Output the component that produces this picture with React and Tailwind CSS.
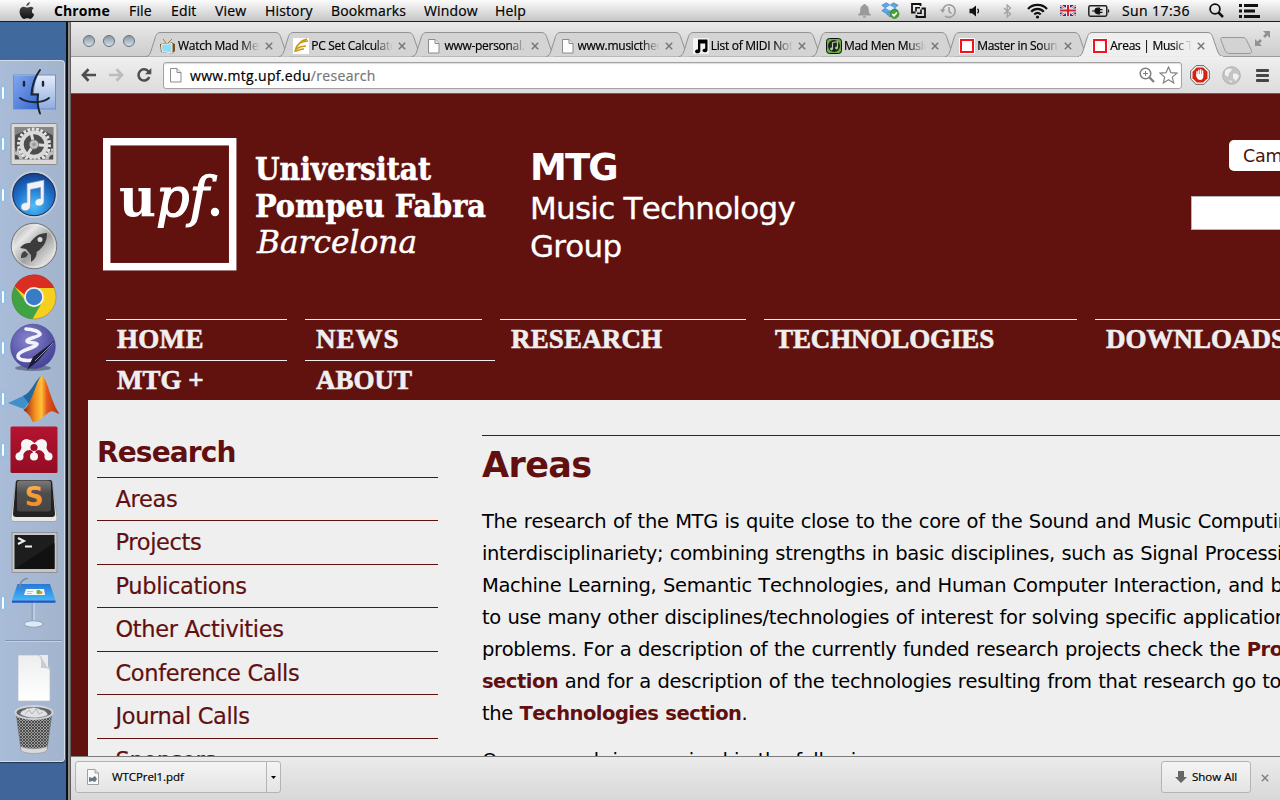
import React from "react";

/* ---------- Menu bar ---------- */

const MENUS = [
  { label: "File", width: "w-[42px]" },
  { label: "Edit", width: "w-[44px]" },
  { label: "View", width: "w-[50px]" },
  { label: "History", width: "w-[66px]" },
  { label: "Bookmarks", width: "w-[93px]" },
  { label: "Window", width: "w-[71px]" },
  { label: "Help", width: "w-[40px]" },
];

function AppleLogo() {
  return (
    <svg width="16" height="18" viewBox="0 0 16 18">
      <defs>
        <linearGradient id="apple" x1="0" y1="0" x2="0" y2="1">
          <stop offset="0" stopColor="#555" />
          <stop offset="1" stopColor="#111" />
        </linearGradient>
      </defs>
      <path
        fill="url(#apple)"
        d="M10.900 0c.2 1.700-1.500 4-3.500 3.900C7.200 2.200 8.900.3 10.900 0zM14.600 6.200c-2.500 1.500-2.100 5 .6 6.100-.6 1.800-2.100 4.500-3.800 4.600-1.200 0-1.600-.7-3.100-.7s-2 .7-3.100.7C3 16.900.6 12.900.6 9.700c0-3 1.900-4.900 4.100-4.900 1.400 0 2.400.8 3.500.8.900 0 2.200-.9 3.800-.8 1.100.1 2 .5 2.600 1.400z"
      />
    </svg>
  );
}

function BellIcon() {
  return (
    <svg width="15" height="16" viewBox="0 0 15 16" fill="#9a9a9a">
      <path d="M7.500 1c.8 0 1.300.5 1.300 1.200 2 .6 2.900 2.100 2.900 4.300 0 3 .5 4 2.300 5.300v.8H1v-.8C2.800 10.500 3.300 9.500 3.300 6.500c0-2.200.9-3.700 2.900-4.300C6.200 1.500 6.700 1 7.500 1z" />
      <path d="M5.800 13.200h3.400c0 2.200-3.400 2.200-3.400 0z" />
    </svg>
  );
}

function DropboxIcon() {
  return (
    <svg width="19" height="17" viewBox="0 0 19 17">
      <g fill="#5aa9e2" stroke="#2f78b5" strokeWidth=".6">
        <path d="M5.500.8L9 3.200 4.500 6 .8 3.300z" />
        <path d="M12.500.8L9 3.200 13.500 6l3.700-2.700z" />
        <path d="M4.500 6L.8 8.800 5.500 11.500 9 8.800z" />
        <path d="M13.500 6l3.700 2.800-4.700 2.700L9 8.800z" />
        <path d="M5.500 12L9 9.500l3.500 2.500L9 15z" />
      </g>
      <path d="M9 3.200L4.500 6 9 8.800 13.500 6z" fill="#d9effc" />
      <circle cx="13.500" cy="12" r="4.400" fill="#4aa52c" stroke="#2d7a18" strokeWidth=".7" />
      <path d="M11.300 12l1.700 1.800 2.900-3.400" fill="none" stroke="#fff" strokeWidth="1.500" />
    </svg>
  );
}

function SyncSquaresIcon() {
  return (
    <svg width="15" height="15" viewBox="0 0 15 15" fill="none" stroke="#111" strokeWidth="1.800">
      <path d="M4.500 9.500H1V1h8.500v2" />
      <path d="M10.500 5.500H14V14H5.500v-2" />
      <path d="M5 8.500V4.800h4M10 6.500v3.700H6" strokeWidth="1.600" />
    </svg>
  );
}

function TimeMachineIcon() {
  return (
    <svg width="17" height="16" viewBox="0 0 17 16" fill="none" stroke="#999" strokeWidth="1.500">
      <path d="M2.600 8A6.300 6.300 0 1 1 5 13" />
      <path d="M9 4v4.500l2.500 2" />
      <path d="M0 6.500h5.200L2.600 10z" fill="#999" stroke="none" />
    </svg>
  );
}

function VolumeIcon() {
  return (
    <svg width="12" height="12" viewBox="0 0 12 12" fill="#111">
      <path d="M.5 3.800H3L7 .5v11L3 8.200H.5z" />
      <path d="M8.500 3.800c1.300 1.300 1.300 3.100 0 4.400" fill="none" stroke="#111" strokeWidth="1.300" />
    </svg>
  );
}

function BluetoothIcon() {
  return (
    <svg width="9" height="14" viewBox="0 0 9 14" fill="none" stroke="#a2a2a2" strokeWidth="1.300">
      <path d="M1 4l6.500 6-3.300 3V1l3.300 3L1 10" />
    </svg>
  );
}

function WifiIcon() {
  return (
    <svg width="21" height="16" viewBox="0 0 21 16" fill="none" stroke="#111" strokeWidth="2.200">
      <path d="M1 6C6 .5 15 .5 20 6" />
      <path d="M4.200 8.800c3.600-3.900 9-3.900 12.600 0" />
      <path d="M7.300 11.500c1.900-1.900 4.500-1.900 6.400 0" />
      <circle cx="10.500" cy="14" r="1.600" fill="#111" stroke="none" />
    </svg>
  );
}

function FlagIcon() {
  return (
    <svg width="16" height="11" viewBox="0 0 16 11">
      <rect width="16" height="11" fill="#27357c" />
      <path d="M0 0l16 11M16 0L0 11" stroke="#fff" strokeWidth="2.200" />
      <path d="M0 0l16 11M16 0L0 11" stroke="#d33" strokeWidth=".8" />
      <path d="M8 0v11M0 5.500h16" stroke="#fff" strokeWidth="4" />
      <path d="M8 0v11M0 5.500h16" stroke="#d4202c" strokeWidth="2.200" />
    </svg>
  );
}

function BatteryIcon() {
  return (
    <svg width="22" height="12" viewBox="0 0 22 12">
      <rect x=".8" y=".8" width="18" height="10.400" rx="1.600" fill="none" stroke="#222" strokeWidth="1.500" />
      <path d="M20 4c1.600.3 1.600 3.700 0 4z" fill="#222" />
      <path d="M4 6h3M7 6c0-2 1.500-2.800 3-2.800h1.500v5.600H10C8.500 8.800 7 8 7 6zM11 4.600h3.500M11 7.400h3.500" fill="#111" stroke="#111" strokeWidth="1.200" />
    </svg>
  );
}

function SearchIcon() {
  return (
    <svg width="15" height="15" viewBox="0 0 15 15" fill="none" stroke="#111">
      <circle cx="6" cy="6" r="4.900" strokeWidth="1.800" />
      <path d="M9.500 9.500l4.500 4.500" strokeWidth="2.500" />
    </svg>
  );
}

function ListIcon() {
  return (
    <svg width="21" height="14" viewBox="0 0 21 14" fill="#111">
      <rect x="0" y="0" width="3" height="3" />
      <rect x="5" y="0" width="14" height="3" />
      <rect x="0" y="5.500" width="3" height="3" />
      <rect x="5" y="5.500" width="11" height="3" />
      <rect x="0" y="11" width="3" height="3" />
      <rect x="5" y="11" width="16" height="3" />
    </svg>
  );
}

function MenuBar() {
  return (
    <header className="flex h-[22px] shrink-0 items-center border-b border-[#101c2c] bg-gradient-to-b from-[#fbfbfb] to-[#c6c6c6] pl-[19px] text-[14px] leading-[21px] whitespace-nowrap text-black">
      <div className="w-[35px] shrink-0">
        <AppleLogo />
      </div>
      <span className="w-[75px] shrink-0 font-bold tracking-[0.1px]">Chrome</span>
      {MENUS.map((m) => (
        <span key={m.label} className={`shrink-0 tracking-[0.15px] [-webkit-text-stroke:0.200px_black] ${m.width}`}>
          {m.label}
        </span>
      ))}
      <div className="flex flex-1 items-center justify-end pr-[20px]">
        <div className="mr-[9px]"><BellIcon /></div>
        <div className="mr-[11px]"><DropboxIcon /></div>
        <div className="mr-[14px]"><SyncSquaresIcon /></div>
        <div className="mr-[12px]"><TimeMachineIcon /></div>
        <div className="mr-[22px]"><VolumeIcon /></div>
        <div className="mr-[15px]"><BluetoothIcon /></div>
        <div className="mr-[12px]"><WifiIcon /></div>
        <div className="mr-[12px]"><FlagIcon /></div>
        <div className="mr-[12px]"><BatteryIcon /></div>
        <span className="mr-[17px] w-[70px] tracking-[0.4px] [-webkit-text-stroke:0.200px_black]">Sun 17:36</span>
        <div className="mr-[15px]"><SearchIcon /></div>
        <ListIcon />
      </div>
    </header>
  );
}

/* ---------- Dock ---------- */

function FinderIcon() {
  return (
    <svg width="50" height="50" viewBox="0 0 50 50">
      <defs>
        <linearGradient id="finderL" x1="0" y1="0" x2="1" y2="1">
          <stop offset="0" stopColor="#7fa6ee" />
          <stop offset="1" stopColor="#3767cc" />
        </linearGradient>
        <linearGradient id="finderR" x1="0" y1="0" x2="0" y2="1">
          <stop offset="0" stopColor="#e6eefb" />
          <stop offset="1" stopColor="#8fabdf" />
        </linearGradient>
      </defs>
      <rect x="4.500" y="7" width="42" height="34" fill="url(#finderR)" stroke="#6f8fcb" />
      <path d="M5 7.500h24c-3 6-4 12-4 18h5c-1 5-1 10 0 15.500H5z" fill="url(#finderL)" />
      <g fill="none" stroke="#1c2430" strokeWidth="2" strokeLinecap="round">
        <path d="M31 2c-6 8-8 16-8.500 24.500H29C28 33 29 40 31 45.500" />
        <path d="M11 30c8 5.500 22 5.500 29 0" />
        <path d="M15 14v3.500M34 14v3.500" strokeWidth="2.400" />
      </g>
    </svg>
  );
}

function PreferencesIcon() {
  return (
    <svg width="50" height="50" viewBox="0 0 50 50">
      <defs>
        <radialGradient id="prefGear">
          <stop offset="0" stopColor="#8a8a8a" />
          <stop offset="1" stopColor="#e2e2e2" />
        </radialGradient>
        <clipPath id="prefClip">
          <rect x="5.500" y="8" width="39" height="32.500" />
        </clipPath>
      </defs>
      <rect x="2" y="4.500" width="46" height="41" rx="1" fill="#d9d9d9" stroke="#8b8b8b" />
      <g clipPath="url(#prefClip)">
        <rect x="5.500" y="8" width="39" height="33" fill="#4c4c4c" />
        <path d="M5.500 8h39v9c-10-8-29-8-39 0z" fill="#858585" />
        <g fill="none">
          <circle cx="6" cy="40" r="9" stroke="#c9c9c9" strokeWidth="3" strokeDasharray="2.400 1.600" />
          <circle cx="6" cy="40" r="6" stroke="#bdbdbd" strokeWidth="3.500" />
          <circle cx="44" cy="40" r="9" stroke="#c9c9c9" strokeWidth="3" strokeDasharray="2.400 1.600" />
          <circle cx="44" cy="40" r="6" stroke="#bdbdbd" strokeWidth="3.500" />
          <circle cx="25" cy="25.500" r="15.500" stroke="#e6e6e6" strokeWidth="3" strokeDasharray="2.600 1.800" />
          <circle cx="25" cy="25.500" r="12.300" stroke="#d9d9d9" strokeWidth="4" />
        </g>
        <path d="M25 25.500L18 36M25 25.500l-3-12M25 25.500l12 1" stroke="#dcdcdc" strokeWidth="3" />
        <circle cx="25" cy="25.500" r="4.500" fill="url(#prefGear)" stroke="#777" />
      </g>
    </svg>
  );
}

function ITunesIcon() {
  return (
    <svg width="50" height="50" viewBox="0 0 50 50">
      <defs>
        <radialGradient id="itunes" cx=".5" cy=".75" r=".75">
          <stop offset="0" stopColor="#4bc1fa" />
          <stop offset=".55" stopColor="#1f72cc" />
          <stop offset="1" stopColor="#123a86" />
        </radialGradient>
      </defs>
      <circle cx="25" cy="24.500" r="22.500" fill="url(#itunes)" stroke="#c8cdd6" strokeWidth="2" />
      <circle cx="25" cy="24.500" r="21.200" fill="none" stroke="#1b2f57" strokeWidth="1" />
      <path
        d="M18 13.500l17-3.500v21c0 6-9 6.500-9 2 0-3.500 3-4.500 5.500-4.500V17.500l-10 2v16c0 6.500-9.500 7-9.500 1.500 0-3.500 3-4.500 6-4.500z"
        fill="#eef3fa"
        stroke="#7d95bd"
        strokeWidth=".7"
      />
    </svg>
  );
}

function LaunchpadIcon() {
  return (
    <svg width="50" height="50" viewBox="0 0 50 50">
      <defs>
        <linearGradient id="launch" x1="0" y1="0" x2="1" y2="1">
          <stop offset="0" stopColor="#8f8f8f" />
          <stop offset=".3" stopColor="#e6e6e6" />
          <stop offset=".55" stopColor="#a0a0a0" />
          <stop offset=".8" stopColor="#dedede" />
          <stop offset="1" stopColor="#8a8a8a" />
        </linearGradient>
      </defs>
      <circle cx="25" cy="25" r="22.800" fill="url(#launch)" stroke="#777" />
      <circle cx="25" cy="25" r="21" fill="none" stroke="#f4f4f4" strokeWidth=".8" opacity=".7" />
      <path d="M38 12c-8 0-13 4-17 10-4 0-7 1-10 5l6 1 5 6 0 7c4-3 6-6 5.500-10C34 27 38 21 38 12z" fill="#3c3c3c" />
      <path d="M16 30c-3 1-4 3-4 7 4 0 6-1 7-4z" fill="#444" />
      <circle cx="31" cy="18.500" r="2.500" fill="#d8d8d8" />
    </svg>
  );
}

function ChromeIcon() {
  return (
    <svg width="50" height="50" viewBox="0 0 50 50">
      <circle cx="25" cy="25" r="22" fill="#f7cf1d" />
      <path d="M5.500 14.500A22 22 0 0 1 45.300 16H25a9.500 9.500 0 0 0-9 7z" fill="#db2e22" />
      <path d="M5.500 14.500A22 22 0 0 0 23.500 47l9.500-16.500c-4.500 6-12.500 5-16-1z" fill="#3fa344" />
      <circle cx="25" cy="25" r="10" fill="#f3f3f3" />
      <circle cx="25" cy="25" r="8.200" fill="#3a7cc4" />
      <circle cx="25" cy="25" r="22" fill="none" stroke="#555" strokeWidth=".7" opacity=".5" />
    </svg>
  );
}

function EmacsIcon() {
  return (
    <svg width="50" height="50" viewBox="0 0 50 50">
      <defs>
        <radialGradient id="emacs" cx=".4" cy=".35" r=".7">
          <stop offset="0" stopColor="#8886cf" />
          <stop offset="1" stopColor="#423f96" />
        </radialGradient>
      </defs>
      <ellipse cx="24" cy="45" rx="18" ry="3" fill="#45506a" opacity=".6" />
      <circle cx="24" cy="23.500" r="22.300" fill="url(#emacs)" stroke="#4a4a90" strokeWidth=".7" />
      <path
        d="M17 6c6 0 15 3 14 5.500-2 2.500-13 4-13 6.500 0 2.500 9 1 10 3-1 4-18 6-19 11.500-.5 5 10 6 17 4"
        fill="none"
        stroke="#f2f2fb"
        strokeWidth="3.600"
        strokeLinecap="round"
      />
      <path d="M46 17.500L29 38l-11 9 6-13z" fill="#1c1d33" />
      <path d="M44 20L26 38" stroke="#8d92b8" strokeWidth="1" />
    </svg>
  );
}

function MatlabIcon() {
  return (
    <svg width="54" height="50" viewBox="0 0 54 50">
      <defs>
        <linearGradient id="mlO" x1="0" y1="0" x2="1" y2="0">
          <stop offset="0" stopColor="#8e1f10" />
          <stop offset=".3" stopColor="#f08a1d" />
          <stop offset=".5" stopColor="#ffc23a" />
          <stop offset=".65" stopColor="#e4581a" />
          <stop offset="1" stopColor="#b32b13" />
        </linearGradient>
      </defs>
      <path d="M1 29l15-7c7-2 10-10 14-15l-4 16-9 12z" fill="#3f8fca" />
      <path d="M16 22c8-3 11-14 18-20L23 31z" fill="#25679e" />
      <path d="M35 2c5 1 8 24 17.500 38-4-1-7-4-10-2-6 4-10 10-17 10-2-6-5-9-9-12C25 31 30 3 35 2z" fill="url(#mlO)" />
    </svg>
  );
}

function MendeleyIcon() {
  return (
    <svg width="50" height="50" viewBox="0 0 50 50">
      <defs>
        <linearGradient id="mend" x1="0" y1="0" x2="0" y2="1">
          <stop offset="0" stopColor="#b5142f" />
          <stop offset="1" stopColor="#930d24" />
        </linearGradient>
      </defs>
      <rect x="1.500" y="1.500" width="47" height="46.500" rx="1.500" fill="url(#mend)" />
      <g fill="#f6f6f6">
        <circle cx="17.500" cy="19.500" r="5.500" />
        <circle cx="32.500" cy="19.500" r="5.500" />
        <circle cx="10.500" cy="31.500" r="4" />
        <circle cx="25" cy="31.500" r="4" />
        <circle cx="39.500" cy="31.500" r="4" />
        <path d="M12.500 18c1 5-1 8-4 11l5 3c1-4 3-7 7-7s4 4 4.500 7h0c.5-3 1-7 4.500-7s6 3 7 7l5-3c-3-3-5-6-4-11l-8-3-4 3-4-3z" />
      </g>
      <circle cx="25" cy="22.500" r="3.600" fill="#9a1029" />
      <path d="M21.500 14L25 17.500 28.500 14z" fill="#b5142f" />
    </svg>
  );
}

function SublimeIcon() {
  return (
    <svg width="50" height="50" viewBox="0 0 50 50">
      <defs>
        <linearGradient id="subl" x1="0" y1="0" x2="0" y2="1">
          <stop offset="0" stopColor="#7a7a7a" />
          <stop offset=".4" stopColor="#4e4e4e" />
          <stop offset="1" stopColor="#454545" />
        </linearGradient>
        <linearGradient id="sublS" x1="0" y1="0" x2="0" y2="1">
          <stop offset="0" stopColor="#fbb454" />
          <stop offset="1" stopColor="#f2811d" />
        </linearGradient>
      </defs>
      <path d="M7 5h36l5 37c0 2-1 3.500-3 3.500H5c-2 0-3-1.500-3-3.500z" fill="#e8e8e8" stroke="#9c9c9c" strokeWidth=".8" />
      <path d="M9 4h32c1.500 0 2 1 2.200 2.500L46 38c0 2-1 3-3 3H7c-2 0-3-1-3-3L6.800 6.500C7 5 7.500 4 9 4z" fill="#222" />
      <rect x="8" y="4.500" width="34" height="31" rx="3" fill="url(#subl)" />
      <text x="25" y="29.500" textAnchor="middle" fontFamily="DejaVu Sans, sans-serif" fontWeight="bold" fontSize="26" fill="url(#sublS)">
        S
      </text>
    </svg>
  );
}

function TerminalIcon() {
  return (
    <svg width="50" height="50" viewBox="0 0 50 50">
      <rect x="3" y="5.500" width="45" height="40" fill="#c4c6c9" stroke="#888" strokeWidth=".8" />
      <rect x="5.500" y="8" width="40" height="34" fill="#1d1d1d" />
      <path d="M5.500 42l40-26v26z" fill="#111" />
      <path d="M9 11l6 3-6 3M16 19.500h7" fill="none" stroke="#f1f1f1" strokeWidth="2" />
    </svg>
  );
}

function KeynoteIcon() {
  return (
    <svg width="50" height="50" viewBox="0 0 50 50">
      <defs>
        <linearGradient id="key" x1="0" y1="0" x2="0" y2="1">
          <stop offset="0" stopColor="#2a76d6" />
          <stop offset="1" stopColor="#42b8f7" />
        </linearGradient>
      </defs>
      <path d="M24 20v25" stroke="#8fa5c4" strokeWidth="3" />
      <path d="M25 20v25" stroke="#e8eef6" strokeWidth="1" />
      <ellipse cx="24.500" cy="46" rx="9.500" ry="3.200" fill="#dfe8f4" stroke="#7f95b5" strokeWidth=".8" />
      <path d="M8.500 6h32.500l5.500 16.500H3z" fill="url(#key)" />
      <path d="M3 22.500h43.500v2.300H3z" fill="#1b58c8" />
      <path d="M17 11h18l1 6H15z" fill="#f4f8fc" />
      <circle cx="29.500" cy="14" r="2.200" fill="#5fb846" />
      <circle cx="32" cy="14.500" r="1.500" fill="#f08b2c" />
      <path d="M18 13.500h6M18 15.500h5" stroke="#9bb" strokeWidth=".8" />
      <path d="M11 9c0-5 3-8 8-9" fill="none" stroke="#7f8794" strokeWidth="1.300" />
    </svg>
  );
}

function DocumentIcon() {
  return (
    <svg width="50" height="50" viewBox="0 0 50 50">
      <defs>
        <linearGradient id="docu" x1="0" y1="0" x2="0" y2="1">
          <stop offset="0" stopColor="#eceeef" />
          <stop offset="1" stopColor="#fff" />
        </linearGradient>
      </defs>
      <path d="M9 2h22l10 14v32H9z" fill="url(#docu)" stroke="#b5bcc6" strokeWidth=".7" />
      <path d="M29 2c4 3 3 8 3 13 4 0 6 0 9 2V16L31 2z" fill="#c9ccd0" />
      <path d="M31 2h8v13z" fill="#f3f4f5" opacity=".85" />
    </svg>
  );
}

function TrashIcon() {
  return (
    <svg width="50" height="52" viewBox="0 0 50 52">
      <defs>
        <pattern id="mesh" width="3" height="3" patternUnits="userSpaceOnUse">
          <rect width="3" height="3" fill="#9d9d9d" />
          <path d="M0 0l3 3M3 0L0 3" stroke="#3a3a3a" strokeWidth=".8" />
        </pattern>
      </defs>
      <path d="M7 8l5 37c3 4.500 23 4.500 26 0l5-37z" fill="url(#mesh)" stroke="#666" strokeWidth=".6" />
      <path d="M11.500 42c4 3.500 23 3.500 27 0l-.6 4.500c-4 4-22 4-25.800 0z" fill="#d7d9dc" stroke="#888" strokeWidth=".5" />
      <ellipse cx="25" cy="8.500" rx="18.500" ry="6.500" fill="#5f6368" stroke="#d2d4d8" strokeWidth="2" />
      <path d="M11 10c2-5 5-3 7-6 4 1 6-2 9 0 3 0 4 2 7 2 3 1 4 3 5 5-7 4-21 4-28-1z" fill="#dfe1e2" stroke="#888" strokeWidth=".6" />
      <path d="M16 10l4-4 3 4 4-5 3 5 4-2" fill="none" stroke="#a5a8aa" strokeWidth=".8" />
    </svg>
  );
}

const DOCK_ITEMS = [
  { Icon: FinderIcon, running: true },
  { Icon: PreferencesIcon, running: true },
  { Icon: ITunesIcon, running: true },
  { Icon: LaunchpadIcon, running: false },
  { Icon: ChromeIcon, running: true },
  { Icon: EmacsIcon, running: true },
  { Icon: MatlabIcon, running: true },
  { Icon: MendeleyIcon, running: true },
  { Icon: SublimeIcon, running: false },
  { Icon: TerminalIcon, running: false },
  { Icon: KeynoteIcon, running: true },
];

function Dock() {
  return (
    <aside className="flex w-[71px] shrink-0 bg-gradient-to-b from-[#406a9e] to-[#3f659b]">
      <div className="flex w-[66px] shrink-0 flex-col pt-[38px]">
        <div className="flex h-[702px] w-[65px] flex-col rounded-r-[4px] border-t border-r border-b border-[#d3dceb] bg-gradient-to-r from-[#a9bcd8] to-[#a3b4cd] pt-[6px] shadow-[0_1px_1px_#22334f]">
          {DOCK_ITEMS.map(({ Icon, running }, i) => (
            <div key={i} className="flex h-[51px] shrink-0 items-center">
              <span
                className={
                  running
                    ? "ml-[2px] h-[12px] w-[2px] shrink-0 rounded-[1px] bg-white shadow-[0_0_3px_1px_#7fc4f5]"
                    : "ml-[2px] h-[12px] w-[2px] shrink-0"
                }
              />
              <div className="flex w-[59px] shrink-0 justify-center">
                <Icon />
              </div>
            </div>
          ))}
          <div className="mt-[12px] ml-[5px] h-[2px] w-[57px] shrink-0 border-t border-[#8494b0] bg-[#c3cfe2]" />
          <div className="mt-[11px] flex h-[51px] shrink-0 justify-center pl-[3px]">
            <DocumentIcon />
          </div>
          <div className="flex shrink-0 justify-center pl-[4px]">
            <TrashIcon />
          </div>
        </div>
      </div>
      <div className="w-[2px] bg-[#0c0f14]" />
      <div className="flex-1 border-r border-[#5f5f5f] bg-[#8c8c8c]" />
    </aside>
  );
}

/* ---------- Browser chrome ---------- */

function TvFavicon() {
  return (
    <svg width="16" height="16" viewBox="0 0 16 16">
      <path d="M3 1l3 4M12 1L8 5" stroke="#a67b3f" strokeWidth="1" />
      <path d="M0 6l12-1.500L15 6v7l-3 2.500L1 14z" fill="#7b4c1c" />
      <path d="M1.500 6.500l10.500-1v9.500L2 13.500z" fill="#8edcf7" stroke="#e6f6fb" strokeWidth="1" />
    </svg>
  );
}

function FeatherFavicon() {
  return (
    <svg width="16" height="16" viewBox="0 0 16 16">
      <rect width="16" height="16" fill="#fff" />
      <path d="M2 14c1-7 5-11 13-11M3 11c3-2 5-3 10-3M5 7c2-3 5-5 9-6M3 13c3-1 5-2 8-2" fill="none" stroke="#c99a10" strokeWidth="1.600" />
    </svg>
  );
}

function PageFavicon() {
  return (
    <svg width="16" height="16" viewBox="0 0 16 16">
      <path d="M2.500 1.500h6.500l4 4v9.500H2.500z" fill="#fdfdfd" stroke="#8c8c8c" />
      <path d="M9 1.500v4h4" fill="#e9e9e9" stroke="#8c8c8c" />
    </svg>
  );
}

function NoteFavicon() {
  return (
    <svg width="16" height="16" viewBox="0 0 16 16">
      <rect width="16" height="16" fill="#f3f3f3" />
      <path d="M5 1.500h9.500V12c0 3-5 3-5 .6 0-1.500 1.500-2 2.700-1.900V5.500H7.300V13c0 3-5.300 3-5.300.5 0-1.600 1.700-2.200 3-2z" fill="#000" />
    </svg>
  );
}

function GreenNoteFavicon() {
  return (
    <svg width="16" height="16" viewBox="0 0 16 16">
      <rect x=".5" y=".5" width="15" height="15" rx="3" fill="#69b23f" stroke="#111" />
      <circle cx="8" cy="8" r="6" fill="#20251d" />
      <path d="M6.500 4.500l5-.8v6M6.500 4.500v6.500" fill="none" stroke="#b7c9ad" strokeWidth="1.200" />
      <circle cx="5.500" cy="11" r="1.400" fill="#b7c9ad" />
      <circle cx="10.500" cy="10" r="1.400" fill="#b7c9ad" />
    </svg>
  );
}

function RedSquareFavicon() {
  return (
    <svg width="16" height="16" viewBox="0 0 16 16">
      <rect width="16" height="16" fill="#fff" />
      <rect x="2" y="2" width="12" height="12" fill="#fff" stroke="#f5121a" strokeWidth="2" />
    </svg>
  );
}

const TABS = [
  { title: "Watch Mad Men", Icon: TvFavicon },
  { title: "PC Set Calculator", Icon: FeatherFavicon },
  { title: "www-personal.umich", Icon: PageFavicon },
  { title: "www.musictheory.net", Icon: PageFavicon },
  { title: "List of MIDI Notes", Icon: NoteFavicon },
  { title: "Mad Men Music", Icon: GreenNoteFavicon },
  { title: "Master in Sound", Icon: RedSquareFavicon },
  { title: "Areas | Music Technology", Icon: RedSquareFavicon, active: true },
];

function Tab({ title, Icon, active }) {
  return (
    <div className={active ? "relative z-10 flex h-[25px] w-[133.2px] shrink-0 items-center pl-[14px]" : "relative flex h-[25px] w-[133.2px] shrink-0 items-center pl-[14px]"}>
      <svg className="absolute top-0 left-0" width="146" height="25" viewBox="0 0 146 25">
        <path
          d="M0 24.500C3 24.300 4 22 5 19L9.500 4.500C10.500 1.500 12 .5 15 .5H129c3 0 4.500 1 5.500 4L139.500 19c1 3 2.500 5.500 6 5.500"
          fill={active ? "#efefef" : "#d4d4d4"}
          stroke="#929292"
        />
        {active && <path d="M1 24.600h144" stroke="#efefef" />}
      </svg>
      <span className="relative mt-[3px] shrink-0">
        <Icon />
      </span>
      <span className="relative mt-[3px] ml-[2px] w-[82px] shrink-0 overflow-hidden text-[12px] leading-[18px] tracking-[-0.28px] whitespace-nowrap text-black [-webkit-text-stroke:0.200px_black] [mask-image:linear-gradient(to_right,black_76%,transparent_100%)]">
        {title}
      </span>
      <svg className="relative mt-[3px] ml-[5px] shrink-0" width="8" height="8" viewBox="0 0 8 8" stroke="#777" strokeWidth="1.500">
        <path d="M.8.8l6.400 6.400M7.200.8L.8 7.200" />
      </svg>
    </div>
  );
}

function TabStrip() {
  return (
    <div className="flex h-[35px] shrink-0 items-end border-b border-[#9b9b9b] bg-gradient-to-b from-[#e9e9e9] to-[#cdcdcd]">
      <div className="flex w-[75px] shrink-0 items-center gap-[8px] self-start pt-[13px] pl-[12px]">
        {[0, 1, 2].map((i) => (
          <span key={i} className="h-[12px] w-[12px] rounded-full border border-[#65707c] bg-gradient-to-b from-[#8b97a3] to-[#d6dfe8]" />
        ))}
      </div>
      <div className="-mb-px flex shrink-0">
        {TABS.map((t) => (
          <Tab key={t.title} {...t} />
        ))}
      </div>
      <svg className="mb-[2px] ml-[8px] shrink-0" width="33" height="17" viewBox="0 0 33 17">
        <path d="M3 .5h19c3 0 4 1 5 3.500l4.500 9.500c.5 2-.5 3-2.500 3H10c-2.500 0-4-1-5-3L.8 3C.3 1.500 1 .5 3 .5z" fill="#d3d3d3" stroke="#999" />
      </svg>
      <svg className="mb-[10px] ml-[2px] shrink-0" width="15" height="15" viewBox="0 0 15 15" fill="#929292">
        <path d="M8 0h7v7l-2.500-2.500L10 7 8 5l2.500-2.500z" />
        <path d="M7 15H0V8l2.500 2.500L5 8l2 2-2.500 2.500z" />
      </svg>
    </div>
  );
}

function Toolbar() {
  return (
    <div className="flex h-[37px] shrink-0 items-center border-b border-[#7b5654] bg-gradient-to-b from-[#efefef] to-[#dcdcdc] pl-[10px]">
      <svg width="15" height="14" viewBox="0 0 15 14" fill="none" stroke="#4d4d4d" strokeWidth="2.700">
        <path d="M15 7H2.500M7.500 1.300L2 7l5.500 5.700" />
      </svg>
      <svg className="ml-[13px]" width="15" height="14" viewBox="0 0 15 14" fill="none" stroke="#bdbdbd" strokeWidth="2.700">
        <path d="M0 7h12.500M7.500 1.300L13 7l-5.500 5.700" />
      </svg>
      <svg className="ml-[12px]" width="16" height="16" viewBox="0 0 16 16" fill="none" stroke="#4d4d4d" strokeWidth="2.500">
        <path d="M12.500 4.500A5.600 5.600 0 1 0 13.300 10" />
        <path d="M15.300 1v6.300H9z" fill="#4d4d4d" stroke="none" />
      </svg>
      <div className="ml-[11px] flex h-[27px] w-[1019px] shrink-0 items-center rounded-[3px] border border-[#a3a3a3] bg-white pl-[4px] shadow-[inset_0_1px_1px_#ddd]">
        <PageFavicon />
        <span className="mt-[1px] ml-[6px] flex-1 text-[14px] leading-[20px] tracking-[0.32px] text-black [-webkit-text-stroke:0.200px]">
          www.mtg.upf.edu<span className="text-[#757575]">/research</span>
        </span>
        <svg width="16" height="16" viewBox="0 0 16 16" fill="none" stroke="#7d7d7d">
          <circle cx="6.500" cy="6.500" r="5.300" strokeWidth="1.500" />
          <path d="M10.500 10.500l4.500 4.500" strokeWidth="2.200" />
          <path d="M6.500 4v5M4 6.500h5" />
        </svg>
        <svg className="mr-[3px] ml-[4px]" width="19" height="18" viewBox="0 0 19 18" fill="#fff" stroke="#858585" strokeWidth="1.200">
          <path d="M9.500 1l2.400 5.600 6 .5-4.600 4 1.400 5.900-5.200-3.200L4.300 17l1.400-5.900-4.600-4 6-.5z" />
        </svg>
      </div>
      <svg className="ml-[8px] shrink-0" width="20" height="20" viewBox="0 0 20 20">
        <path d="M6 .7h8L19.300 6v8L14 19.300H6L.7 14V6z" fill="#fff" stroke="#5d5d5d" />
        <path d="M6.700 2.500h6.600l4.200 4.200v6.600l-4.200 4.200H6.700l-4.200-4.200V6.700z" fill="#d8200f" />
        <path
          d="M7 10.500V6.800M8.800 9V5.200M10.700 9V4.800M12.600 9.500V6"
          fill="none"
          stroke="#fff"
          strokeWidth="1.400"
          strokeLinecap="round"
        />
        <path d="M6.300 9h7v2.500c0 2-1.200 3.500-3 3.500-2 0-3-1-4-3.500z" fill="#fff" />
      </svg>
      <svg className="ml-[12px] shrink-0" width="19" height="19" viewBox="0 0 19 19">
        <circle cx="9.500" cy="9.500" r="8.800" fill="#c4c4c4" stroke="#b0b0b0" />
        <path d="M3 5c3-3 6-3 7-1l-3 3-1 4-3-2zM11 8c3-1 5 0 6 2l-3 5-3-3zM7 14l3 1-1 2z" fill="#f1f1f1" />
      </svg>
      <svg className="ml-[15px] shrink-0" width="13" height="13" viewBox="0 0 13 13" fill="#454545">
        <rect width="13" height="3" rx="1" />
        <rect y="5" width="13" height="3" rx="1" />
        <rect y="10" width="13" height="3" rx="1" />
      </svg>
    </div>
  );
}

/* ---------- Web page ---------- */

function UpfLogo() {
  return (
    <svg width="390" height="134" viewBox="0 0 390 134" fill="#fff" fontFamily="'DejaVu Serif Condensed', 'DejaVu Serif', serif">
      <rect x="3.700" y="3.700" width="126" height="125" fill="none" stroke="#fff" strokeWidth="7.500" />
      <text x="16" y="78" fontSize="54" fontWeight="bold" textLength="37" lengthAdjust="spacingAndGlyphs">u</text>
      <text x="53" y="78" fontSize="54" fontStyle="italic" textLength="53" lengthAdjust="spacingAndGlyphs" stroke="#fff" strokeWidth="1.200">pf</text>
      <circle cx="112" cy="74" r="4.200" />
      <text x="152" y="42" fontSize="32" fontWeight="bold" textLength="176" lengthAdjust="spacingAndGlyphs" stroke="#fff" strokeWidth=".5">Universitat</text>
      <text x="152" y="79" fontSize="32" fontWeight="bold" textLength="231" lengthAdjust="spacingAndGlyphs" stroke="#fff" strokeWidth=".5">Pompeu Fabra</text>
      <text x="154" y="115" fontSize="32" fontStyle="italic" textLength="160" lengthAdjust="spacingAndGlyphs" stroke="#fff" strokeWidth=".4">Barcelona</text>
    </svg>
  );
}

function NavItem({ label, width }) {
  return (
    <a className={`h-[41px] shrink-0 border-t border-[#efefef] pl-[11px] leading-[38px] ${width}`}>{label}</a>
  );
}

function SiteHeader() {
  return (
    <div className="flex h-[306px] shrink-0 flex-col pl-[32px]">
      <div className="flex h-[225px] shrink-0">
        <div className="w-[427px] shrink-0 pt-[44px]">
          <UpfLogo />
        </div>
        <div className="w-[561px] shrink-0 pt-[53px] text-white">
          <div className="text-[37px] leading-[42px] font-bold tracking-[-1.9px]">MTG</div>
          <div className="text-[31px] leading-[38px] tracking-[-0.75px] [-webkit-text-stroke:0.300px_white] [font-kerning:none]">
            Music Technology
            <br />
            Group
          </div>
        </div>
        <div className="flex flex-1 flex-col pt-[46px]">
          <div className="ml-[138px] h-[31px] w-[90px] shrink-0 rounded-[5px] bg-white pl-[14px] text-[17.5px] leading-[32px] tracking-[-0.2px] whitespace-nowrap text-[#4b1010]">
            Campus Global
          </div>
          <div className="mt-[25px] ml-[100px] h-[34px] w-[160px] shrink-0 border border-[#b5b5b5] bg-white" />
        </div>
      </div>
      <nav className="flex flex-col pl-[3px] font-['Liberation_Serif',serif] text-[27px] font-bold whitespace-nowrap text-[#efefef] [-webkit-text-stroke:0.600px_#efefef]">
        <div className="flex gap-[18px]">
          <NavItem label="HOME" width="w-[181px] tracking-[0.3px]" />
          <NavItem label="NEWS" width="w-[177px] tracking-[1px]" />
          <NavItem label="RESEARCH" width="w-[246px] tracking-[0.15px]" />
          <NavItem label="TECHNOLOGIES" width="w-[313px] tracking-[-0.12px]" />
          <NavItem label="DOWNLOADS" width="w-[260px]" />
        </div>
        <div className="flex gap-[18px]">
          <NavItem label="MTG +" width="w-[181px]" />
          <NavItem label="ABOUT" width="w-[190px]" />
        </div>
      </nav>
    </div>
  );
}

const SECTIONS = ["Areas", "Projects", "Publications", "Other Activities", "Conference Calls", "Journal Calls", "Sponsors"];

function Sidebar() {
  return (
    <div className="w-[341px] shrink-0 pt-[30px] text-[#610f0f]">
      <h2 className="h-[46.5px] text-[28px] leading-[45px] font-bold tracking-[-0.85px]">Research</h2>
      <ul>
        {SECTIONS.map((s) => (
          <li key={s} className="h-[43.5px] border-t border-[#610f0f] pl-[18.5px] text-[22.5px] leading-[43px] tracking-[-0.35px] [-webkit-text-stroke:0.200px_#610f0f]">
            {s}
          </li>
        ))}
      </ul>
    </div>
  );
}

function Article() {
  return (
    <article className="w-[860px] shrink-0 pt-[35px]">
      <h1 className="border-t border-[#610f0f] text-[35px] leading-[59px] font-bold tracking-[-0.6px] text-[#610f0f]">Areas</h1>
      <p className="mt-[11px] text-[19.5px] leading-[32px] tracking-[-0.33px] whitespace-nowrap text-black [font-kerning:none] [word-spacing:0.034em]">
        The research of the MTG is quite close to the core of the Sound and Music Computing
        <br />
        interdisciplinariety; combining strengths in basic disciplines, such as Signal Processing
        <br />
        Machine Learning, Semantic Technologies, and Human Computer Interaction, and by
        <br />
        to use many other disciplines/technologies of interest for solving specific applications
        <br />
        problems. For a description of the currently funded research projects check the{" "}
        <b className="tracking-[-0.5px] text-[#610f0f]">Projects</b>
        <br />
        <b className="tracking-[-0.5px] text-[#610f0f]">section</b> and for a description of the technologies resulting from that research go to
        <br />
        the <b className="tracking-[-0.5px] text-[#610f0f]">Technologies section</b>.
      </p>
      <p className="mt-[15px] text-[19.5px] leading-[32px] tracking-[-0.33px] whitespace-nowrap text-black [font-kerning:none] [word-spacing:0.034em]">
        Our research is organized in the following areas:
      </p>
    </article>
  );
}

function WebPage() {
  return (
    <main className="flex min-h-0 flex-1 flex-col overflow-hidden bg-[#61110e] font-['DejaVu_Sans',sans-serif]">
      <SiteHeader />
      <div className="ml-[17px] flex h-[400px] shrink-0 gap-[44px] bg-[#efefef] pl-[9px]">
        <Sidebar />
        <Article />
      </div>
    </main>
  );
}

function DownloadBar() {
  return (
    <footer className="flex h-[44px] shrink-0 items-start border-t border-[#7c7c7c] bg-gradient-to-b from-[#ebebeb] to-[#d8d8d8] pt-[4px] pl-[4px] text-[11.5px] text-black [-webkit-text-stroke:0.200px]">
      <div className="flex h-[32px] w-[206px] items-center rounded-[3px] border border-[#b4b4b4] bg-gradient-to-b from-[#f4f4f4] to-[#e4e4e4]">
        <svg className="ml-[10px]" width="14" height="16" viewBox="0 0 14 16">
          <path d="M1.500.5h7.500l3.500 3.500v11.500h-11z" fill="#fafafa" stroke="#a0a0a0" />
          <path d="M9 .5V4h3.500" fill="#ddd" stroke="#a0a0a0" />
          <path d="M3 8l3 1 3-2 2 3-2 3-3-1-3 1z" fill="#6b7684" />
        </svg>
        <span className="ml-[12px] flex-1 tracking-[-0.08px]">WTCPrel1.pdf</span>
        <span className="flex h-[30px] w-[14px] items-center justify-center border-l border-[#b4b4b4]">
          <svg width="5" height="3" viewBox="0 0 5 3">
            <path d="M0 0h5L2.500 3z" />
          </svg>
        </span>
      </div>
      <div className="flex-1" />
      <div className="flex h-[32px] w-[90px] items-center rounded-[3px] border border-[#b4b4b4] bg-gradient-to-b from-[#f4f4f4] to-[#e4e4e4] pl-[13px] whitespace-nowrap">
        <svg width="12" height="12" viewBox="0 0 12 12">
          <path d="M3 0h6v6h3l-6 6-6-6h3z" fill="#666" />
        </svg>
        <span className="ml-[5px]">Show All</span>
      </div>
      <svg className="mt-[13px] mr-[11px] ml-[10px]" width="8" height="8" viewBox="0 0 8 8" stroke="#808080" strokeWidth="1.400">
        <path d="M.8.8l6.400 6.400M7.200.8L.8 7.200" />
      </svg>
    </footer>
  );
}

export default function App() {
  return (
    <div className="flex h-[800px] w-[1280px] flex-col overflow-hidden bg-black font-['Open_Sans','Noto_Sans',sans-serif]">
      <MenuBar />
      <div className="flex min-h-0 flex-1">
        <Dock />
        <div className="flex min-w-0 flex-1 flex-col overflow-hidden">
          <TabStrip />
          <Toolbar />
          <WebPage />
          <DownloadBar />
        </div>
      </div>
    </div>
  );
}
